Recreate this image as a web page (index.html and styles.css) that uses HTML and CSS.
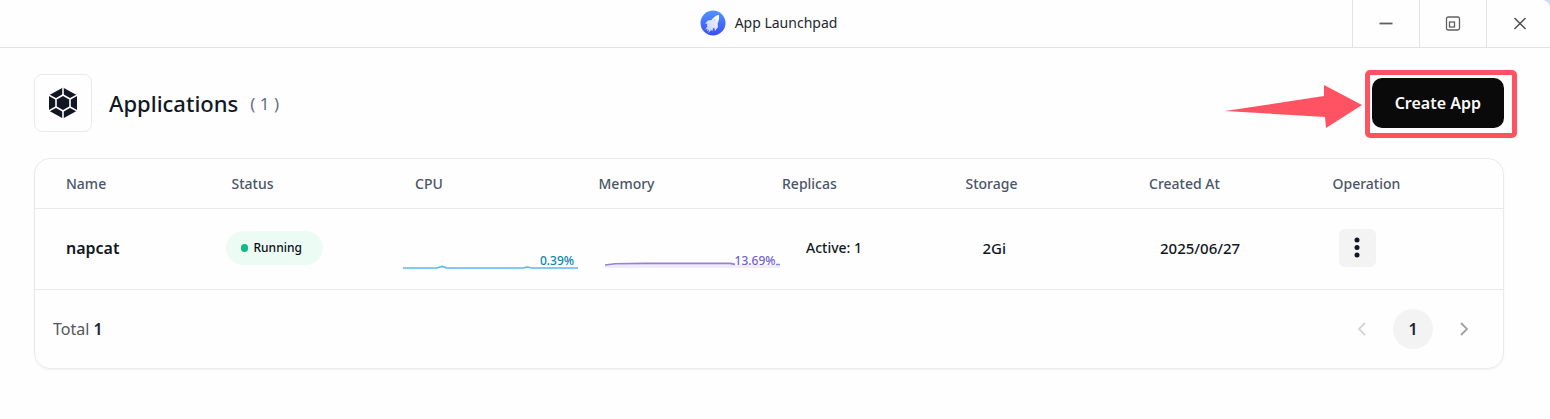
FILE: index.html
```html
<!doctype html>
<html lang="en">

<head>
    <meta charset="UTF-8">
    <meta name="viewport" content="width=device-width, initial-scale=1.0">
    <title>App Launchpad</title>
    <link rel="stylesheet" href="styles.css">
</head>

<body>
    <div class="window">
        <header class="titlebar">
            <div class="title">
                <svg width="26" height="26" viewBox="0 0 26 26" aria-hidden="true">
                    <defs>
                        <linearGradient id="logoBg" x1="0" y1="0" x2="0" y2="1">
                            <stop offset="0" stop-color="#4f94fb"/>
                            <stop offset="1" stop-color="#3a4dfb"/>
                        </linearGradient>
                        <linearGradient id="rocket" x1="1" y1="0" x2="0" y2="1">
                            <stop offset="0" stop-color="#fff"/>
                            <stop offset="1" stop-color="#b9c8fd"/>
                        </linearGradient>
                    </defs>
                    <circle cx="13" cy="13" r="12.5" fill="url(#logoBg)"/>
                    <path d="M18.900 4.800c.5 3 .1 6.100-1.300 8.600l.3 3.800-3 3.700-.7-3.300-1.200 1-.7 2.600-1.200-1.200-2.700 2.900.6-3.100-2.300 1.500.9-2.500-2.500.6 2.300-2.900-.6-1.300.9-1.400-2.600-.1 2.800-3.200 3.600-.4c1.600-2.500 4.300-4.600 7.400-5.300z" fill="url(#rocket)"/>
                    <circle cx="14.800" cy="10.200" r="1.100" fill="#d3deff"/>
                </svg>
                <span>App Launchpad</span>
            </div>
            <div class="controls">
                <button type="button" aria-label="Minimize">
                    <svg width="16" height="16" viewBox="0 0 16 16"><path d="M1.500 7.500h13" stroke="#5f6062" stroke-width="1.800"/></svg>
                </button>
                <button type="button" aria-label="Restore">
                    <svg width="16" height="16" viewBox="0 0 16 16" fill="none" stroke="#5f6062" stroke-width="1.300"><rect x="1.500" y="1" width="13" height="13" rx="1.800"/><rect x="4.500" y="6" width="5" height="5"/></svg>
                </button>
                <button type="button" aria-label="Close">
                    <svg width="16" height="16" viewBox="0 0 16 16"><path d="M2.500 2l11 11M13.500 2l-11 11" stroke="#4d4e50" stroke-width="1.500"/></svg>
                </button>
            </div>
        </header>

        <main>
            <div class="page-head">
                <div class="page-icon">
                    <svg width="30" height="32" viewBox="0 0 30 32" aria-hidden="true">
                        <path d="M15 .5l14 7.800v15.400l-14 7.800-14-7.800V8.300z" fill="#111824"/>
                        <path d="M15 0v8M15 24v8M0 7.600l8 4.400M22 20l8 4.400M0 24.400l8-4.400M22 12l8-4.400" stroke="#fefefe" stroke-width="1.600"/>
                        <path d="M15 8l7 4v8l-7 4-7-4v-8z" fill="none" stroke="#fefefe" stroke-width="1.600"/>
                    </svg>
                </div>
                <h1>Applications</h1>
                <span class="count">( 1 )</span>
                <div class="create">
                    <button type="button" class="create-btn">Create App</button>
                    <span class="highlight"></span>
                    <svg class="arrow" width="138" height="46" viewBox="0 0 138 46" aria-hidden="true">
                        <path d="M0 27L99 12V1l38 20-36 23-1-11z" fill="#ff5364"/>
                    </svg>
                </div>
            </div>

            <section class="card">
                <table>
                    <thead>
                        <tr>
                            <th>Name</th>
                            <th>Status</th>
                            <th>CPU</th>
                            <th>Memory</th>
                            <th>Replicas</th>
                            <th>Storage</th>
                            <th>Created At</th>
                            <th>Operation</th>
                        </tr>
                    </thead>
                    <tbody>
                        <tr>
                            <td class="name">napcat</td>
                            <td class="status"><span class="badge">Running</span></td>
                            <td class="cpu">
                                <div class="chart">
                                    <svg width="175" height="16" viewBox="0 0 175 16" aria-hidden="true">
                                        <path d="M0 13h34l5-1.500 5 1.500h76l4-1 5 1h46" fill="none" stroke="#5ab8ef" stroke-width="1.700"/>
                                    </svg>
                                    <span>0.39%</span>
                                </div>
                            </td>
                            <td class="memory">
                                <div class="chart">
                                    <svg width="175" height="16" viewBox="0 0 175 16" aria-hidden="true">
                                        <path d="M0 10l10-1.200 30-.4h85l5 1h45V13H0z" fill="#f0ebfd"/>
                                        <path d="M0 10l10-1.200 30-.4h85l5 1M171 9.500h4" fill="none" stroke="#9580db" stroke-width="1.600"/>
                                    </svg>
                                    <span>13.69%</span>
                                </div>
                            </td>
                            <td class="replicas">Active: 1</td>
                            <td class="storage">2Gi</td>
                            <td class="created">2025/06/27</td>
                            <td class="operation">
                                <button type="button" class="more" aria-label="More">
                                    <svg width="8" height="22" viewBox="0 0 8 22" fill="#111824"><circle cx="4" cy="3" r="2.500"/><circle cx="4" cy="10.500" r="2.500"/><circle cx="4" cy="18" r="2.500"/></svg>
                                </button>
                            </td>
                        </tr>
                    </tbody>
                </table>

                <div class="card-foot">
                    <span class="total">Total <b>1</b></span>
                    <nav class="pager" aria-label="Pages">
                        <button type="button" aria-label="Previous" disabled>
                            <svg width="10" height="16" viewBox="0 0 10 16"><path d="M8 2L2 8l6 6" fill="none" stroke="#d3d4d6" stroke-width="1.800"/></svg>
                        </button>
                        <button type="button" class="current">1</button>
                        <button type="button" aria-label="Next">
                            <svg width="10" height="16" viewBox="0 0 10 16"><path d="M2 2l6 6-6 6" fill="none" stroke="#9fa1a5" stroke-width="1.800"/></svg>
                        </button>
                    </nav>
                </div>
            </section>
        </main>
    </div>
</body>

</html>
```

FILE: styles.css
```css
* {
    box-sizing: border-box;
}

body {
    margin: 0;
    background-color: #c9dcfb;
    color: #111824;
    font-family: "Noto Sans", "Open Sans", sans-serif;
    font-size: 14px;
}

button {
    padding: 0;
    border: none;
    background: none;
    color: inherit;
    font: inherit;
    cursor: pointer;
}

svg {
    display: block;
}

.window {
    min-height: 100vh;
    background-color: #fefefe;
    border-top-right-radius: 8px;
}

.titlebar {
    display: grid;
    grid-template-columns: 1fr auto 1fr;
    height: 48px;
    border-bottom: 1px solid #e2e3e4;
}

.title {
    grid-column: 2;
    display: flex;
    align-items: center;
    gap: 9px;
    padding: 0 13px 2px 0;
    color: #24282c;
}

.controls {
    display: flex;
    justify-content: flex-end;
}

.controls button {
    width: 67px;
    display: flex;
    align-items: center;
    justify-content: center;
    border-left: 1px solid #e2e3e4;
}

.controls button:last-child {
    width: 64px;
    padding-left: 3px;
}

main {
    padding: 26px 46px 50px 34px;
}

.page-head {
    display: flex;
    align-items: center;
    margin-bottom: 26px;
}

.page-icon {
    width: 58px;
    height: 58px;
    display: flex;
    align-items: center;
    justify-content: center;
    border: 1px solid #e8eaee;
    border-radius: 8px;
}

h1 {
    margin: 0 12px 0 17px;
    font-size: 22px;
    font-weight: 500;
}

.count {
    color: #667085;
    font-size: 17px;
}

.create {
    position: relative;
    margin-left: auto;
}

.create-btn {
    display: block;
    height: 50px;
    padding: 0 23px;
    border-radius: 10px;
    background-color: #0a0a0a;
    color: #fafafa;
    font-size: 16px;
    font-weight: 600;
}

/* callout around the create button */
.highlight {
    position: absolute;
    inset: -8px -13px -10px -7px;
    border: 5px solid #ff5364;
    border-radius: 5px;
    pointer-events: none;
}

.arrow {
    position: absolute;
    top: 6px;
    right: 141px;
}

.card {
    border: 1px solid #e9eaec;
    border-radius: 16px;
    box-shadow: 0 1px 2px rgba(0, 0, 0, 0.05);
}

table {
    width: 100%;
    table-layout: fixed;
    border-collapse: collapse;
}

th,
td {
    padding: 0 13px;
    border-bottom: 1px solid #e9eaec;
    text-align: left;
    font-weight: 500;
}

th {
    height: 49px;
    color: #4b5568;
}

td {
    height: 81px;
    padding-bottom: 2px;
}

th:first-child,
.name {
    padding-left: 31px;
}

.name {
    font-size: 16px;
    font-weight: 600;
}

.status {
    padding-left: 7px;
}

.badge {
    display: flex;
    align-items: center;
    gap: 6px;
    width: fit-content;
    height: 34px;
    padding: 0 21px 0 15px;
    border-radius: 17px;
    background-color: #ecfcf5;
    color: #0a0f14;
    font-size: 12px;
}

.badge::before {
    content: "";
    width: 7px;
    height: 8px;
    border-radius: 4px;
    background-color: #10b981;
}

.cpu {
    padding: 29px 0 0 1px;
    color: #0884ad;
}

.memory {
    padding: 29px 0 0 19px;
    color: #7360d0;
}

.chart {
    position: relative;
    width: 175px;
}

.chart span {
    position: absolute;
    right: 4px;
    bottom: 3px;
    font-size: 12px;
    line-height: 14px;
}

.replicas {
    padding-left: 37px;
}

.storage {
    padding-left: 30px;
}

.created {
    padding-left: 24px;
}

.storage,
.created {
    font-size: 15px;
}

.operation {
    padding-left: 19px;
}

.more {
    width: 37px;
    height: 38px;
    display: flex;
    align-items: center;
    justify-content: center;
    border-radius: 6px;
    background-color: #f3f3f4;
}

.card-foot {
    display: flex;
    align-items: center;
    justify-content: space-between;
    padding: 19px 22px 19px 18px;
}

.total {
    color: #555659;
    font-size: 16px;
}

.total b {
    color: #1d2433;
    font-weight: 600;
}

.pager {
    display: flex;
    gap: 14px;
}

.pager button {
    width: 34px;
    height: 40px;
    display: flex;
    align-items: center;
    justify-content: center;
}

.pager .current {
    width: 40px;
    border-radius: 50%;
    background-color: #f3f3f4;
    color: #1d2433;
    font-size: 16px;
    font-weight: 600;
}
```
